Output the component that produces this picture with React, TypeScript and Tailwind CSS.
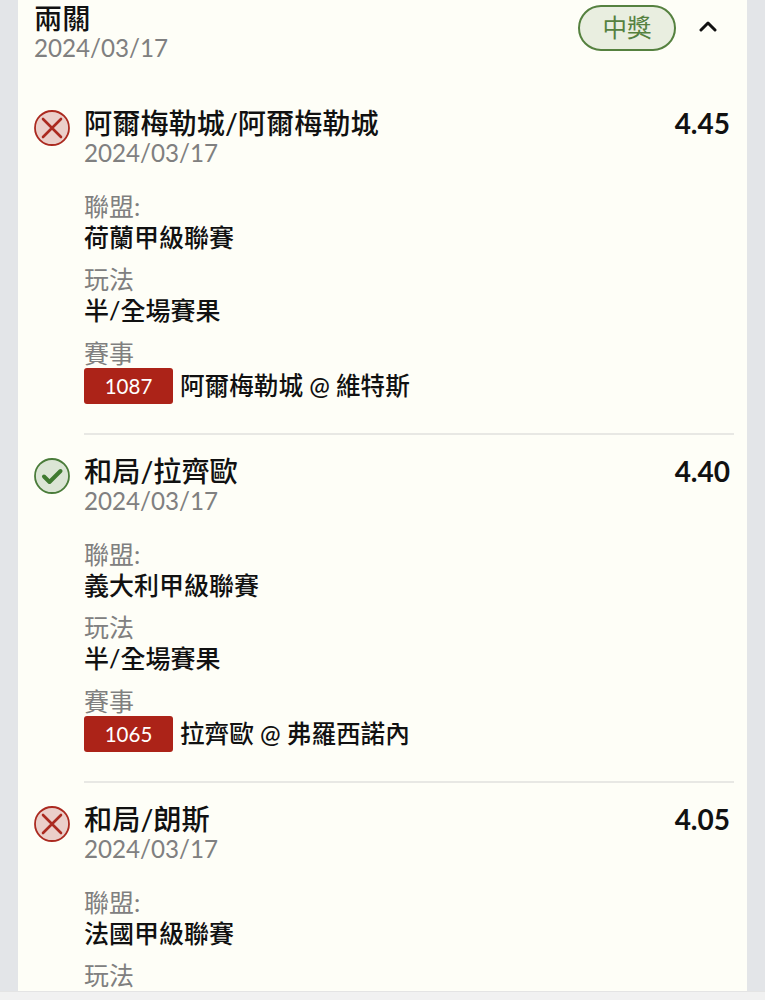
import React from "react";

type Leg = {
  status: "lost" | "won";
  title: string;
  odds: string;
  league: string;
  play?: string;
  code?: string;
  match?: string;
  last?: boolean;
};

const legs: Leg[] = [
  { status: "lost", title: "阿爾梅勒城/阿爾梅勒城", odds: "4.45", league: "荷蘭甲級聯賽", play: "半/全場賽果", code: "1087", match: "阿爾梅勒城 @ 維特斯" },
  { status: "won", title: "和局/拉齊歐", odds: "4.40", league: "義大利甲級聯賽", play: "半/全場賽果", code: "1065", match: "拉齊歐 @ 弗羅西諾內" },
  { status: "lost", title: "和局/朗斯", odds: "4.05", league: "法國甲級聯賽", last: true },
];

function StatusIcon({ status }: { status: Leg["status"] }) {
  if (status === "lost") {
    return (
      <svg width="36" height="36" viewBox="0 0 36 36" className="shrink-0">
        <circle cx="18" cy="18" r="17" fill="#ebcfca" stroke="#ab2a20" strokeWidth="1.8" />
        <path d="M9 9 L27 27 M27 9 L9 27" stroke="#ab2a20" strokeWidth="2.6" strokeLinecap="round" fill="none" />
      </svg>
    );
  }
  return (
    <svg width="36" height="36" viewBox="0 0 36 36" className="shrink-0">
      <circle cx="18" cy="18" r="17" fill="#dbe5d5" stroke="#4a7c3a" strokeWidth="1.8" />
      <path d="M10 18.5 L15.5 24 L26.5 13" stroke="#3f7a30" strokeWidth="4" strokeLinecap="round" strokeLinejoin="round" fill="none" />
    </svg>
  );
}

function Field({ label, value }: { label: string; value: string }) {
  return (
    <div className="flex flex-col">
      <div className="h-[30px] text-[25px] leading-[29px] text-[#808080]">{label}</div>
      <div className="h-[30px] text-[25px] leading-[30px] font-medium text-[#111111]">{value}</div>
    </div>
  );
}

function LegRow({ leg }: { leg: Leg }) {
  return (
    <div className="flex items-start pl-[16px] pr-[13px]">
      <div className="mt-[3px] w-[50px] shrink-0">
        <StatusIcon status={leg.status} />
      </div>
      <div className="min-w-0 flex-1">
        <div className="flex items-center justify-between pr-[4px]">
          <div className="h-[32px] text-[28.2px] leading-[32px] font-medium text-[#111111]">{leg.title}</div>
          <div className="text-[28px] leading-[32px] font-bold text-[#111111]">{leg.odds}</div>
        </div>
        <div className="h-[28px] text-[24.2px] leading-[28px] text-[#808080]">2024/03/17</div>
        <div className="mt-[25px] flex flex-col gap-[13px]">
          <Field label="聯盟:" value={leg.league} />
          {leg.last ? (
            <div className="h-[30px] text-[25px] leading-[29px] text-[#808080]">玩法</div>
          ) : (
            <>
              <Field label="玩法" value={leg.play ?? ""} />
              <div className="mt-[1px] flex flex-col">
                <div className="h-[29px] text-[25px] leading-[29px] text-[#808080]">賽事</div>
                <div className="flex items-center gap-[7px]">
                  <span className="flex h-[36px] w-[89px] items-center justify-center rounded-[3px] bg-[#ac2318] text-[20.5px] text-[#ffffff]">{leg.code}</span>
                  <span className="text-[24.6px] leading-[36px] font-medium text-[#111111]">{leg.match}</span>
                </div>
              </div>
            </>
          )}
        </div>
        {!leg.last && <div className="mt-[29px] mb-[20px] h-[2px] bg-[#e8e8e4]" />}
      </div>
    </div>
  );
}

export default function App() {
  return (
    <div className="relative h-[1000px] w-[765px] overflow-hidden bg-[#e3e5e8] font-['Lato','Noto_Sans_CJK_TC',sans-serif]">
      <div className="mx-[18px] h-[991px] overflow-hidden bg-[#fefef7]">
        <div className="flex items-start justify-between pt-[1px] pl-[16px] pr-[30px]">
          <div className="flex flex-col">
            <div className="h-[33px] text-[28.2px] leading-[34px] font-medium text-[#111111]">兩關</div>
            <div className="h-[28px] text-[24.2px] leading-[28px] text-[#808080]">2024/03/17</div>
          </div>
          <div className="mt-[4px] flex items-center gap-[23px]">
            <span className="flex h-[46px] w-[98px] items-center justify-center rounded-full border-2 border-[#55813f] bg-[#e9eee0] text-[24.5px] text-[#55813f]">中獎</span>
            <svg width="18" height="12" viewBox="0 0 18 12" className="mb-[5px]">
              <path d="M2 10 L9 3 L16 10" stroke="#111111" strokeWidth="3" strokeLinecap="round" strokeLinejoin="round" fill="none" />
            </svg>
          </div>
        </div>
        <div className="mt-[45px]">
          {legs.map((leg) => (
            <LegRow key={leg.title} leg={leg} />
          ))}
        </div>
      </div>
      <div className="h-[9px] border-t border-[#e4e4e4] bg-[#f1f1f1]" />
    </div>
  );
}
